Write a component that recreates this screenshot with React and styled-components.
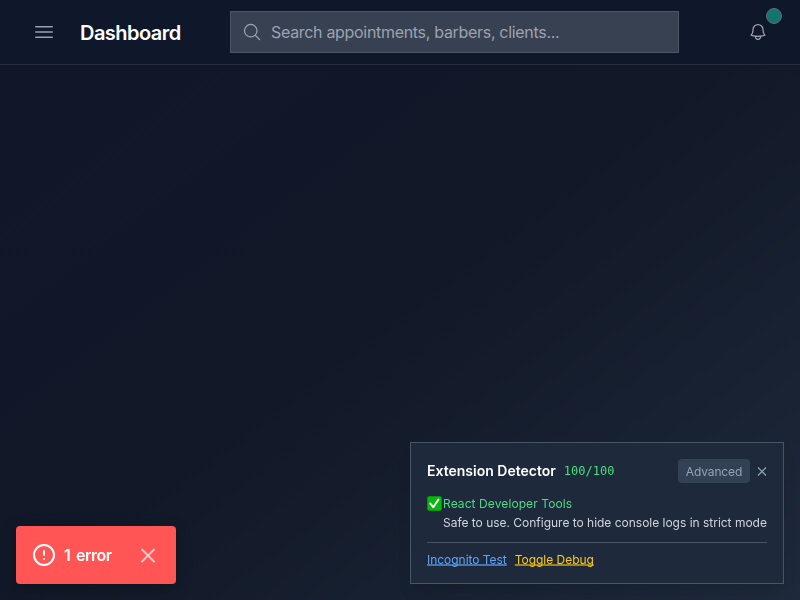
import React from 'react';
import styled, { createGlobalStyle } from 'styled-components';

const GlobalStyle = createGlobalStyle`
  * { box-sizing: border-box; }
  body {
    margin: 0;
    overflow: hidden;
    font-family: Inter, "Liberation Sans", sans-serif;
    -webkit-font-smoothing: antialiased;
  }
  button { font-family: inherit; border: 0; padding: 0; background: none; }
`;

const Page = styled.div`
  height: 100vh;
  background: linear-gradient(to bottom right, #0f172a 0%, #111827 50%, #1e293b 100%);
`;

const Header = styled.header`
  display: flex;
  align-items: center;
  height: 65px;
  padding: 0 32px;
  background: #0f172a;
  border-bottom: 1px solid #292f3e;
`;

const IconButton = styled.button`
  display: flex;
  color: ${(p) => p.$color || '#9ca3af'};
`;

const Title = styled.h1`
  margin: 0 0 0 24px;
  width: 150px;
  font-size: 20px;
  line-height: 28px;
  font-weight: 600;
  letter-spacing: -0.53px;
  color: #fff;
  padding-top: 2px;
`;

const SearchBox = styled.label`
  display: flex;
  align-items: center;
  gap: 9px;
  width: 449px;
  height: 42px;
  padding: 0 12px 0 11px;
  background: #374151;
  border: 1px solid #4b5563;
  color: #9ca3af;
`;

const SearchInput = styled.input`
  flex: 1;
  min-width: 0;
  padding: 0;
  border: 0;
  outline: 0;
  background: none;
  font: 400 16px/24px Inter, sans-serif;
  letter-spacing: -0.31px;
  color: #fff;
  &::placeholder { color: #9ca3af; opacity: 1; }
`;

const BellWrap = styled.div`
  position: relative;
  margin-left: 69px;
`;

const Badge = styled.span`
  position: absolute;
  left: 18px;
  top: -14px;
  width: 16px;
  height: 16px;
  border-radius: 50%;
  background: #14756f;
  border: 1px solid #626978;
`;

const Panel = styled.section`
  position: fixed;
  right: 16px;
  bottom: 16px;
  width: 374px;
  height: 142px;
  padding: 16px;
  background: #1e293b;
  border: 1px solid #475569;
  box-shadow: 0 10px 15px -3px rgba(0, 0, 0, 0.1), 0 4px 6px -4px rgba(0, 0, 0, 0.1);
  font-size: 12px;
  line-height: 16px;
`;

const PanelHead = styled.div`
  display: flex;
  align-items: center;
  height: 24px;
  margin-bottom: 13px;
`;

const PanelTitle = styled.h2`
  margin: 0 8px 0 0;
  font-size: 14px;
  line-height: 20px;
  font-weight: 600;
  color: #fff;
`;

const Score = styled.span`
  font-family: "DejaVu Sans Mono", monospace;
  font-size: 12px;
  color: #4ade80;
`;

const Advanced = styled.button`
  margin-left: auto;
  margin-right: 7px;
  width: 72px;
  height: 24px;
  border-radius: 4px;
  background: #334155;
  color: #94a3b8;
  font-size: 12px;
  letter-spacing: -0.12px;
`;

const Item = styled.div`
  display: flex;
  align-items: center;
  letter-spacing: 0.09px;
  color: #4ade80;
`;

const Emoji = styled.span`
  display: flex;
  width: 16px;
  margin-bottom: 1px;
`;

const Note = styled.p`
  margin: 3px 0 0 16px;
  letter-spacing: -0.015px;
  color: #d1d5db;
  white-space: nowrap;
`;

const Actions = styled.div`
  display: flex;
  gap: 8px;
  margin-top: 11px;
  padding-top: 9px;
  border-top: 1px solid #475569;
`;

const Link = styled.button`
  font-size: 12px;
  line-height: 16px;
  letter-spacing: -0.03px;
  color: ${(p) => p.$color};
  text-decoration: underline;
  text-decoration-color: ${(p) => p.$line};
  text-decoration-thickness: 2px;
  text-decoration-skip-ink: none;
  text-underline-offset: 0;
`;

const Toast = styled.div`
  position: fixed;
  left: 16px;
  bottom: 16px;
  display: flex;
  align-items: center;
  width: 160px;
  height: 58px;
  padding: 0 16px;
  border-radius: 4px;
  background: #ff5555;
  color: #fff;
  font-size: 16px;
  font-weight: 600;
  box-shadow: 0 4px 16px rgba(0, 0, 0, 0.25);
`;

const ToastText = styled.span`
  flex: 1;
  margin-left: 8px;
  letter-spacing: -0.45px;
  word-spacing: 2px;
`;

const Stroke = ({ size, d, width = 1.5 }) => (
  <svg width={size} height={size} viewBox="0 0 24 24" fill="none" stroke="currentColor"
    strokeWidth={width} strokeLinecap="round" strokeLinejoin="round">
    <path d={d} />
  </svg>
);

const MENU = 'M3.75 6.75h16.5M3.75 12h16.5m-16.5 5.25h16.5';
const SEARCH = 'm21 21-5.197-5.197m0 0A7.5 7.5 0 1 0 5.196 5.196a7.5 7.5 0 0 0 10.607 10.607Z';
const BELL = 'M14.857 17.082a23.848 23.848 0 0 0 5.454-1.31A8.967 8.967 0 0 1 18 9.75V9A6 6 0 0 0 6 9v.75a8.967 8.967 0 0 1-2.312 6.022c1.733.64 3.56 1.085 5.455 1.31m5.714 0a24.255 24.255 0 0 1-5.714 0m5.714 0a3 3 0 1 1-5.714 0';

export default function App() {
  return (
    <Page>
      <GlobalStyle />
      <Header>
        <IconButton aria-label="Menu"><Stroke size={24} d={MENU} /></IconButton>
        <Title>Dashboard</Title>
        <SearchBox>
          <Stroke size={20} d={SEARCH} />
          <SearchInput placeholder="Search appointments, barbers, clients..." />
        </SearchBox>
        <BellWrap>
          <IconButton aria-label="Notifications"><Stroke size={20} d={BELL} /></IconButton>
          <Badge />
        </BellWrap>
      </Header>

      <Panel>
        <PanelHead>
          <PanelTitle>Extension Detector</PanelTitle>
          <Score>100/100</Score>
          <Advanced>Advanced</Advanced>
          <IconButton aria-label="Close" $color="#94a3b8">
            <svg width="10" height="10" viewBox="0 0 10 10" stroke="currentColor" strokeWidth="1.1">
              <path d="M1 1.5 9 9.5M9 1.5 1 9.5" />
            </svg>
          </IconButton>
        </PanelHead>
        <Item>
          <Emoji>
            <svg width="15" height="15" viewBox="0 0 15 15">
              <rect x="0.3" y="0.3" width="14.4" height="14.4" rx="2" fill="#05b80b" />
              <path d="M3.3 7.6 6.3 11.1 11.5 3.5" fill="none" stroke="#fff" strokeWidth="2" strokeLinecap="round" strokeLinejoin="round" />
            </svg>
          </Emoji>
          React Developer Tools
        </Item>
        <Note>Safe to use. Configure to hide console logs in strict mode</Note>
        <Actions>
          <Link $color="#60a5fa" $line="#4475b0">Incognito Test</Link>
          <Link $color="#facc15" $line="#9a8424">Toggle Debug</Link>
        </Actions>
      </Panel>

      <Toast>
        <svg width="24" height="24" viewBox="0 0 24 24" fill="none" stroke="#fff" strokeWidth="2" strokeLinecap="round">
          <circle cx="12" cy="12" r="10" />
          <path d="M12 8v4M12 16h.01" />
        </svg>
        <ToastText>1 error</ToastText>
        <svg width="24" height="24" viewBox="0 0 24 24" fill="none" stroke="#ffc6c6" strokeWidth="2" strokeLinecap="round">
          <path d="M18 6.5 6 18.5M6 6.5l12 12" />
        </svg>
      </Toast>
    </Page>
  );
}
